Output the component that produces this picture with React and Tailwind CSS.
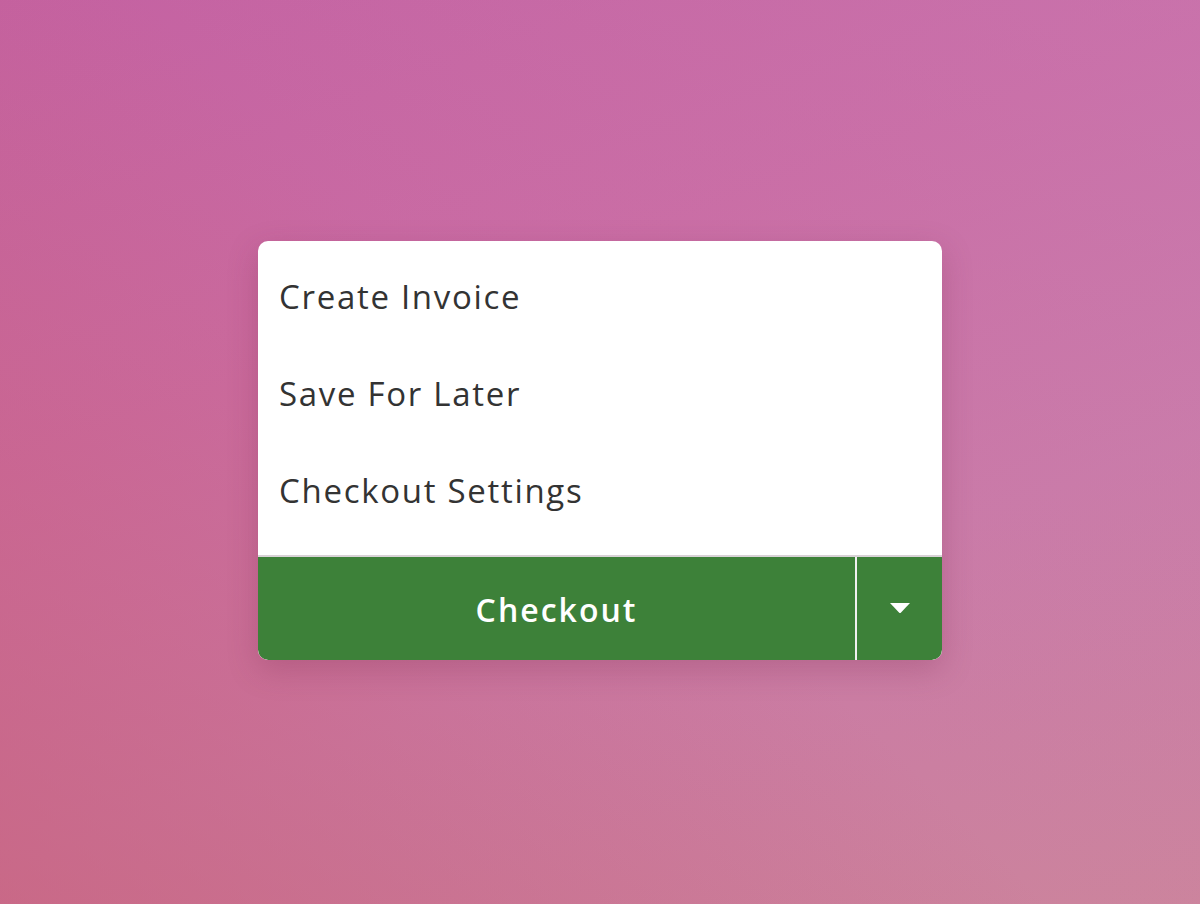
export default function App() {
  const items = ["Create Invoice", "Save For Later", "Checkout Settings"];
  return (
    <div
      className="w-[1200px] h-[904px] flex items-start justify-center pt-[241px] bg-[linear-gradient(160deg,#c462a2_0%,#ca6ca3_35%,#ca7aa6_65%,#cc849c_100%)] relative overflow-hidden"
      style={{ fontFamily: "'Open Sans', Lato, sans-serif" }}
    >
      <div className="absolute inset-0 bg-[linear-gradient(45deg,rgba(200,90,110,0.55)_0%,rgba(200,100,130,0)_50%,rgba(200,130,190,0.3)_100%)]" />
      <div className="relative w-[684px] rounded-[10px] bg-white shadow-[0_10px_30px_rgba(120,40,70,0.25)] overflow-hidden flex flex-col">
        <div className="flex flex-col pt-[7px] pb-[16px]">
          {items.map((t) => (
            <div key={t} className="h-[97px] flex items-center pl-[21px] text-[33px] leading-[40px] tracking-[1.7px] text-[#333333]">
              {t}
            </div>
          ))}
        </div>
        <div className="h-[2px] bg-[#d8d2d6]" />
        <div className="h-[103px] flex bg-[#3d8139] rounded-b-[10px]">
          <div className="flex-1 flex items-center justify-center text-white text-[32px] font-semibold tracking-[2px] pt-[2px]">
            Checkout
          </div>
          <div className="w-[2px] bg-[#f0f0f0]" />
          <div className="w-[85px] flex items-center justify-center pb-[2px]">
            <svg width="22" height="12" viewBox="0 0 22 12">
              <path d="M1 1 L21 1 L12 10.5 Q11 11.5 10 10.5 Z" fill="white" />
            </svg>
          </div>
        </div>
      </div>
    </div>
  );
}
